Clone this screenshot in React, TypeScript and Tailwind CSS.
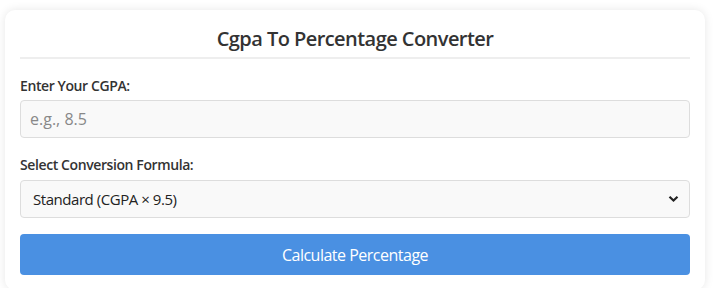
import React from "react";

export default function App() {
  return (
    <div className="min-h-screen bg-white pt-[10px] px-[5px]" style={{ fontFamily: '"Open Sans", "Noto Sans", sans-serif' }}>
      <div className="w-[700px] rounded-[10px] bg-white px-[15px] pt-[15px] pb-[15px] shadow-[0_0_10px_rgba(0,0,0,0.1)]">
        <h2 className="text-center text-[20px] font-semibold leading-[28px] tracking-[-0.55px] text-[#333] pb-[4px] border-b-2 border-[#eeeeee]">
          Cgpa To Percentage Converter
        </h2>
        <div className="mt-[17px]">
          <label className="block text-[14px] font-semibold leading-[20px] tracking-[-0.4px] text-[#333] mb-[4px]">Enter Your CGPA:</label>
          <input
            type="text"
            placeholder="e.g., 8.5"
            className="block w-full h-[38px] rounded-[4px] border border-[#dddddd] bg-[#f9f9f9] px-[9px] text-[16px] text-[#333] placeholder:text-[#888] outline-none"
          />
        </div>
        <div className="mt-[17px]">
          <label className="block text-[14px] font-semibold leading-[20px] tracking-[-0.4px] text-[#333] mb-[5px]">Select Conversion Formula:</label>
          <button
            type="button"
            className="flex w-full h-[38px] items-center justify-between rounded-[4px] border border-[#dddddd] bg-[#f9f9f9] pl-[12px] pr-[10px] text-left text-[15px] text-[#222]"
          >
            <span className="tracking-[-0.45px]">Standard (CGPA × 9.5)</span>
            <svg width="11" height="8" viewBox="0 0 11 8">
              <path d="M1.5 1.8 L5.5 5.6 L9.5 1.8" fill="none" stroke="#222" strokeWidth="2.2" />
            </svg>
          </button>
        </div>
        <button className="mt-[16px] block w-full h-[41px] rounded-[4px] bg-[#4a90e2] text-[16px] tracking-[-0.5px] text-white">
          Calculate Percentage
        </button>
      </div>
    </div>
  );
}
